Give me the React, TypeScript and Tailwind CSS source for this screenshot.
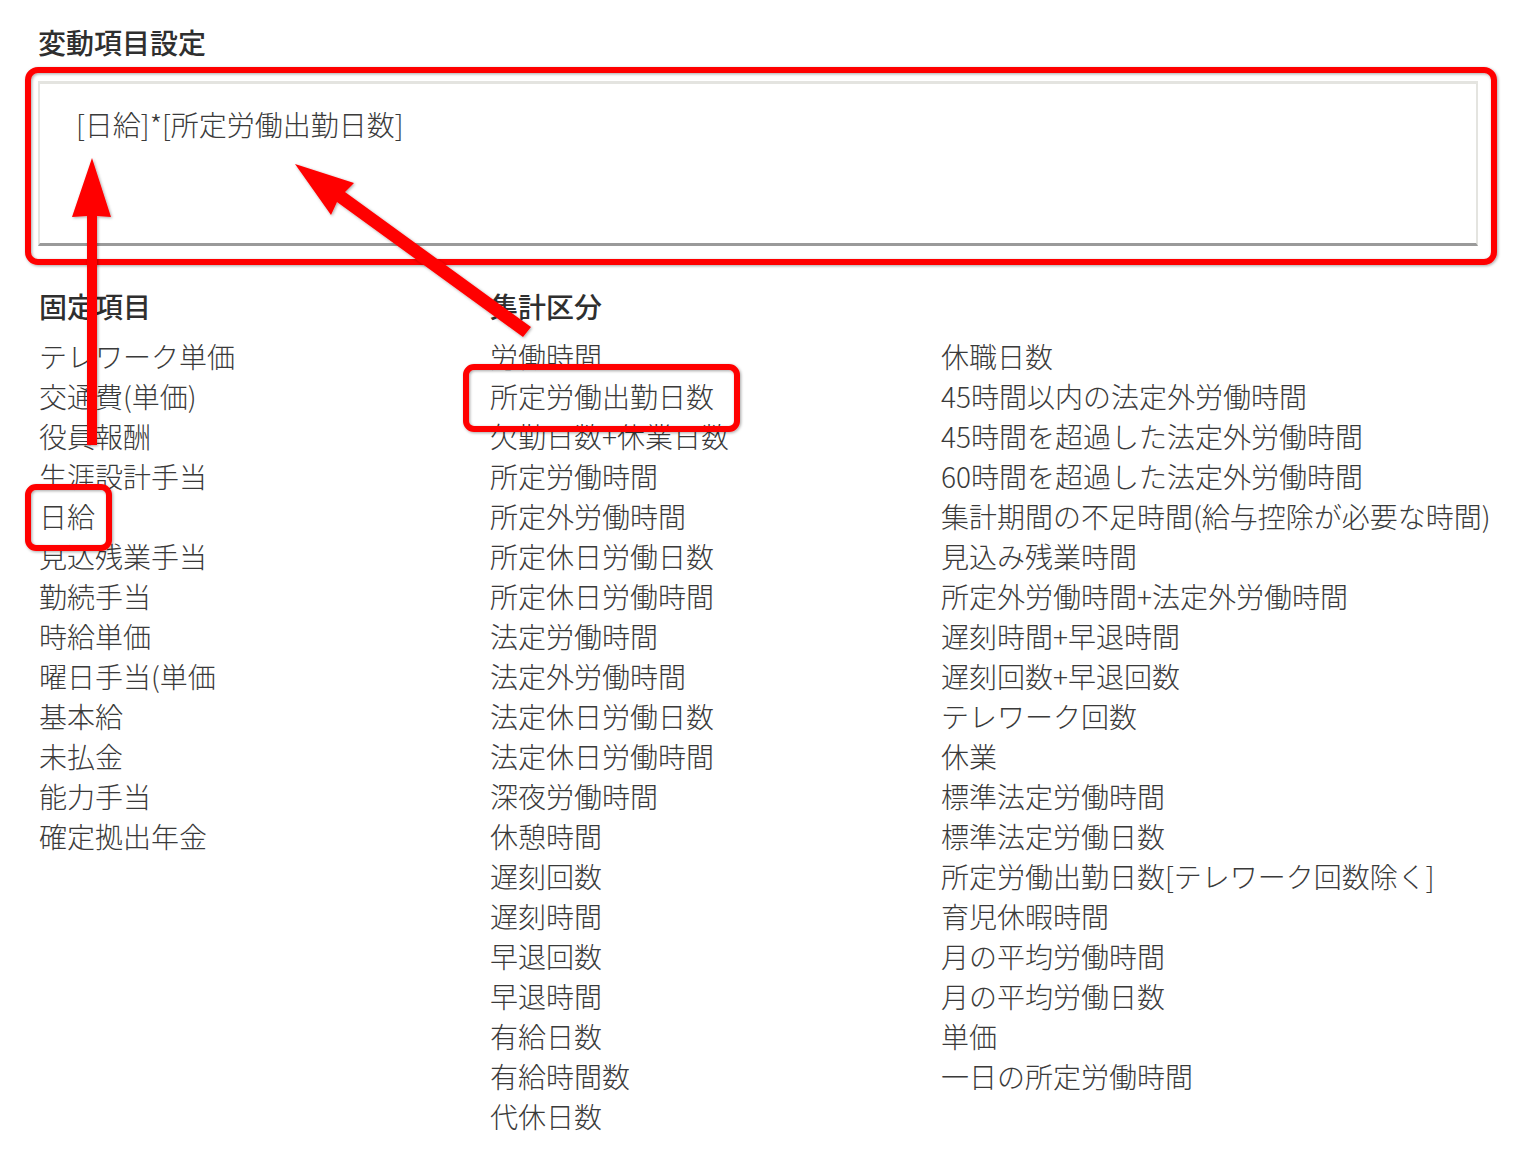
const fixedItems = [
  "テレワーク単価",
  "交通費(単価)",
  "役員報酬",
  "生涯設計手当",
  "日給",
  "見込残業手当",
  "勤続手当",
  "時給単価",
  "曜日手当(単価",
  "基本給",
  "未払金",
  "能力手当",
  "確定拠出年金",
];

const summaryItems = [
  "労働時間",
  "所定労働出勤日数",
  "欠勤日数+休業日数",
  "所定労働時間",
  "所定外労働時間",
  "所定休日労働日数",
  "所定休日労働時間",
  "法定労働時間",
  "法定外労働時間",
  "法定休日労働日数",
  "法定休日労働時間",
  "深夜労働時間",
  "休憩時間",
  "遅刻回数",
  "遅刻時間",
  "早退回数",
  "早退時間",
  "有給日数",
  "有給時間数",
  "代休日数",
];

const moreItems = [
  "休職日数",
  "45時間以内の法定外労働時間",
  "45時間を超過した法定外労働時間",
  "60時間を超過した法定外労働時間",
  "集計期間の不足時間(給与控除が必要な時間)",
  "見込み残業時間",
  "所定外労働時間+法定外労働時間",
  "遅刻時間+早退時間",
  "遅刻回数+早退回数",
  "テレワーク回数",
  "休業",
  "標準法定労働時間",
  "標準法定労働日数",
  "所定労働出勤日数[テレワーク回数除く]",
  "育児休暇時間",
  "月の平均労働時間",
  "月の平均労働日数",
  "単価",
  "一日の所定労働時間",
];

function ItemColumn({ title, items }: { title?: string; items: string[] }) {
  return (
    <div className="flex flex-col">
      <h3 className="text-[28px] leading-[40px] font-medium text-[#2f2f2f] mb-[10px] h-[40px]">
        {title}
      </h3>
      <ul className="flex flex-col">
        {items.map((item) => (
          <li key={item} className="text-[28px] leading-[40px] font-light whitespace-nowrap">
            {item}
          </li>
        ))}
      </ul>
    </div>
  );
}

function Annotations() {
  return (
    <svg
      className="absolute left-0 top-0 pointer-events-none"
      width="1525"
      height="1155"
      viewBox="0 0 1525 1155"
    >
      <defs>
        <filter id="shadow" x="-10%" y="-10%" width="120%" height="120%">
          <feDropShadow dx="1" dy="1" stdDeviation="1.6" floodColor="#000" floodOpacity="0.35" />
        </filter>
      </defs>
      <g filter="url(#shadow)" fill="none" stroke="#ff0000" strokeWidth="6">
        <rect x="28" y="70" width="1466" height="192" rx="10" />
        <rect x="466" y="367" width="271" height="62" rx="8" />
        <rect x="28" y="487" width="81" height="61" rx="8" />
      </g>
      <g filter="url(#shadow)" fill="#ff0000">
        <polygon points="87,445 97,445 97,216 111,217 92,158 72,217 87,216" />
        <polygon points="531,327 523,337 337,202 331,215 295,164 354,183 345,192" />
      </g>
    </svg>
  );
}

export default function App() {
  return (
    <div className="relative min-h-screen bg-white text-[#3a3a3a] font-['Noto_Sans_CJK_JP','Noto_Sans',sans-serif] pl-[38px] pt-[22px]">
      <h2 className="text-[28px] leading-[40px] font-medium text-[#2f2f2f]">変動項目設定</h2>

      <div className="mt-[19px] w-[1440px] h-[165px] bg-white border-t-[3px] border-x-2 border-b-[3px] border-[#e4e4e0] border-b-[#9a9a9a] pl-[36px] pt-[20px]">
        <p className="text-[28px] leading-[40px] font-light">[日給]*[所定労働出勤日数]</p>
      </div>

      <div className="grid grid-cols-[451px_451px_451px] mt-[40px] pl-px">
        <ItemColumn title="固定項目" items={fixedItems} />
        <ItemColumn title="集計区分" items={summaryItems} />
        <ItemColumn items={moreItems} />
      </div>

      <Annotations />
    </div>
  );
}
